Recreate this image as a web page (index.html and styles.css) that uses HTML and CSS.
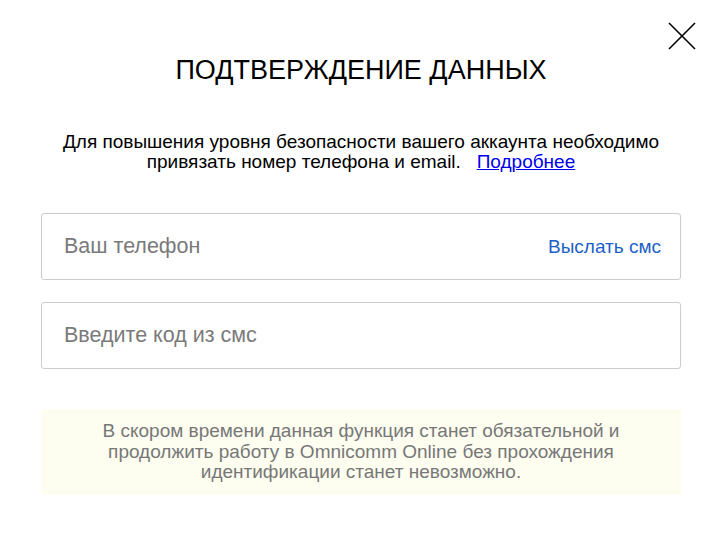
FILE: index.html
```html
<!DOCTYPE html>
<html lang="ru">
<head>
<meta charset="utf-8">
<link rel="stylesheet" href="styles.css">
</head>
<body>
<div class="modal">
  <button class="close" aria-label="Закрыть">
    <svg width="28" height="28" viewBox="0 0 28 28"><path d="M1 1 L27 27 M27 1 L1 27" stroke="#000" stroke-width="1.6" fill="none"/></svg>
  </button>
  <h1 class="title">ПОДТВЕРЖДЕНИЕ ДАННЫХ</h1>
  <p class="intro">Для повышения уровня безопасности вашего аккаунта необходимо<br>привязать номер телефона и email.&nbsp;&nbsp; <a href="#" class="more">Подробнее</a></p>
  <div class="field">
    <span class="placeholder">Ваш телефон</span>
    <a href="#" class="send">Выслать смс</a>
  </div>
  <div class="field">
    <span class="placeholder">Введите код из смс</span>
  </div>
  <div class="notice">В скором времени данная функция станет обязательной и<br>продолжить работу в Omnicomm Online без прохождения<br>идентификации станет невозможно.</div>
</div>
</body>
</html>
```
FILE: styles.css
```css
html, body {
  margin: 0;
  padding: 0;
  background: #fff;
  font-family: "Liberation Sans", Arial, sans-serif;
}
.modal {
  position: relative;
  width: 640px;
  padding: 52px 44px 0 41px;
  display: flex;
  flex-direction: column;
}
.close {
  position: absolute;
  top: 22px;
  right: 29px;
  width: 28px;
  height: 28px;
  padding: 0;
  border: 0;
  background: none;
}
.close svg { display: block; }
.title {
  margin: 0;
  font-size: 27px;
  font-weight: normal;
  text-align: center;
  color: #000;
  line-height: 36px;
}
.intro {
  margin: 44px 0 0;
  font-size: 19px;
  line-height: 20px;
  text-align: center;
  color: #000;
}
.more {
  color: #0000ee;
  text-decoration: underline;
}
.field {
  margin-top: 41px;
  height: 65px;
  border: 1px solid #cccccc;
  border-radius: 3px;
  display: flex;
  align-items: center;
  justify-content: space-between;
  padding: 0 19px 0 22px;
}
.field + .field { margin-top: 22px; }
.placeholder {
  font-size: 21.5px;
  color: #7a7a7a;
}
.send {
  font-size: 19px;
  color: #1d5fc9;
  text-decoration: none;
}
.notice {
  margin-top: 40px;
  background: #fdfdf0;
  padding: 12px 10px 12px;
  font-size: 19px;
  line-height: 20.5px;
  text-align: center;
  color: #777;
}
```
